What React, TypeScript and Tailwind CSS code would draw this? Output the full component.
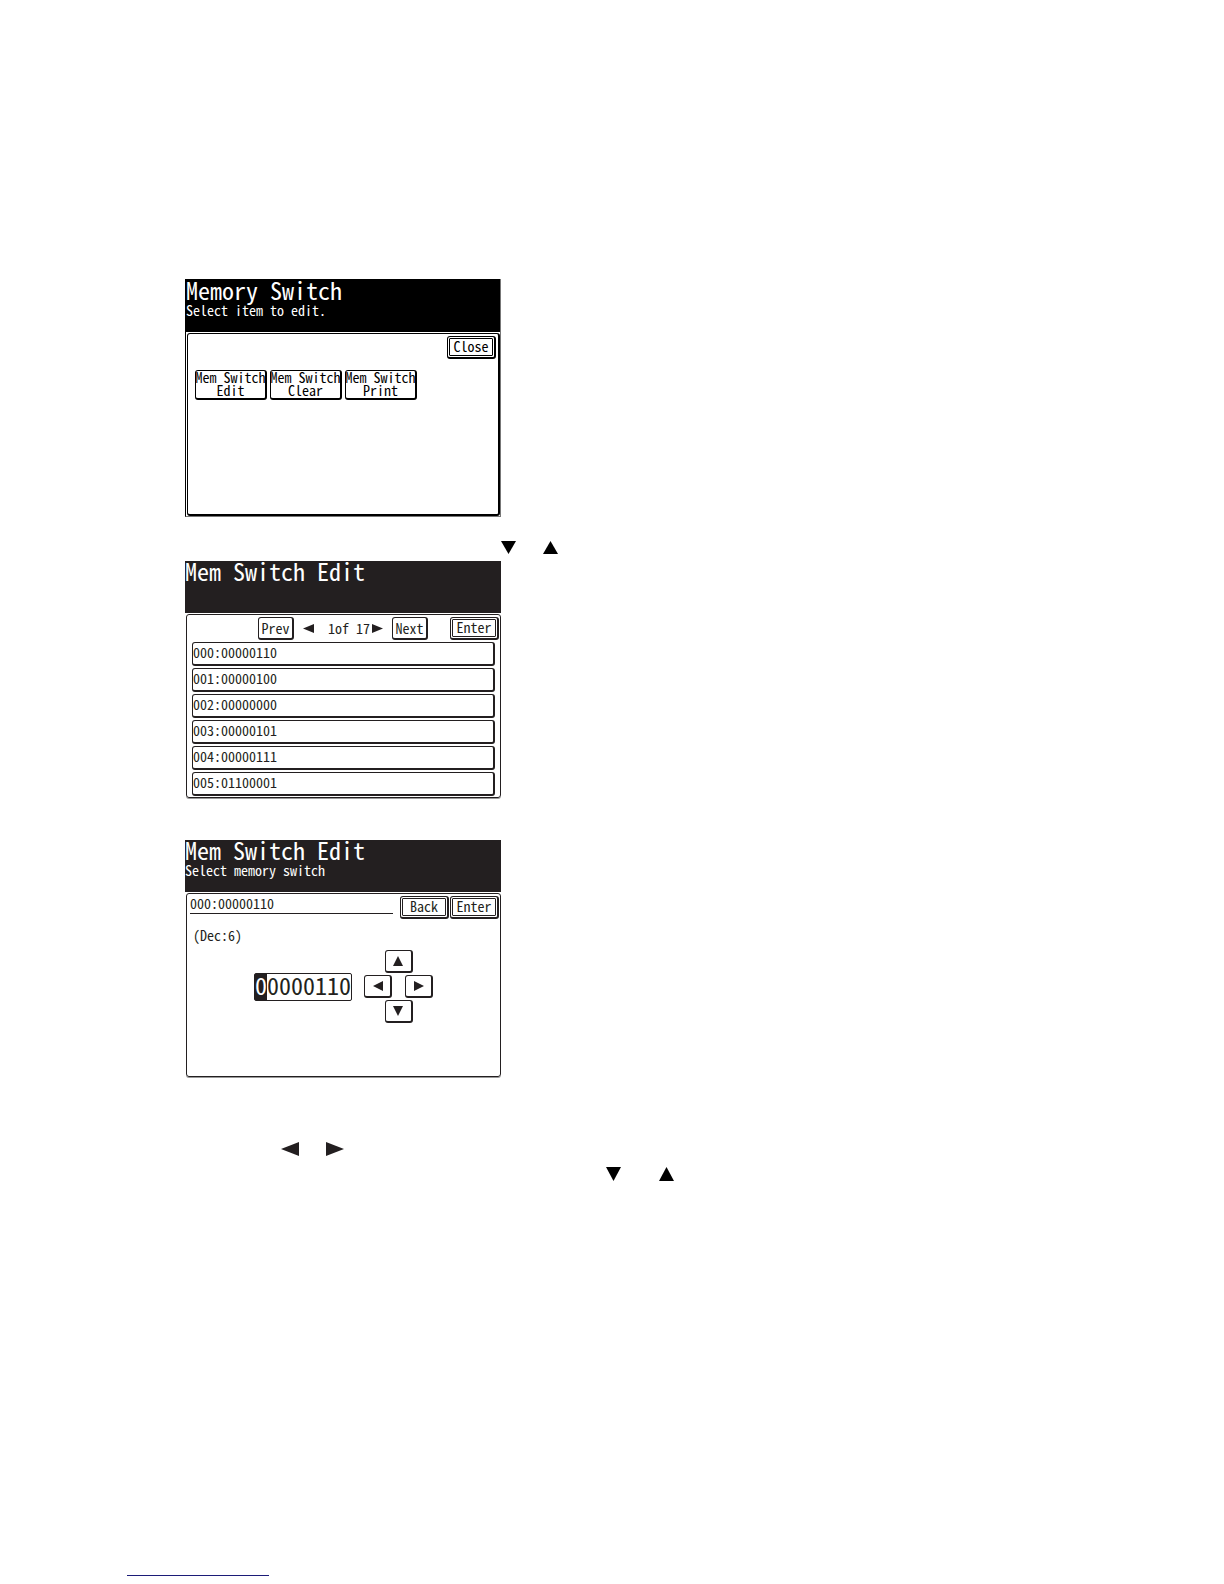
import React, { useState } from "react";

type Direction = "up" | "down" | "left" | "right";

const points: Record<Direction, string> = {
  up: "5,0 10,10 0,10",
  down: "0,0 10,0 5,10",
  left: "10,0 10,10 0,5",
  right: "0,0 10,5 0,10",
};

function Triangle({ dir, className }: { dir: Direction; className: string }) {
  return (
    <svg viewBox="0 0 10 10" preserveAspectRatio="none" fill="currentColor" aria-hidden="true" className={"shrink-0 " + className}>
      <polygon points={points[dir]} />
    </svg>
  );
}

function Header({ title, subtitle, className }: { title: string; subtitle?: string; className: string }) {
  return (
    <header className={"text-white " + className}>
      <h2 className="text-2xl leading-5">{title}</h2>
      {subtitle && <p className="mt-0.5 leading-4">{subtitle}</p>}
    </header>
  );
}

function DoubleButton({ label }: { label: string }) {
  return (
    <button type="button" className="h-[23px] w-[49px] shrink-0 rounded-[3px] border border-r-2 border-b-2 border-current p-px">
      <span className="block h-full rounded-[1px] border border-current text-center leading-[14px]">{label}</span>
    </button>
  );
}

function PageButton({ label }: { label: string }) {
  return (
    <button type="button" className="h-[23px] w-9 shrink-0 rounded-[3px] border border-r-2 border-b-2 border-current text-center leading-4">
      {label}
    </button>
  );
}

function ArrowButton({ dir }: { dir: Direction }) {
  return (
    <button
      type="button"
      aria-label={"Move " + dir}
      className="flex h-[23px] w-7 items-center justify-center rounded-[3px] border border-r-2 border-b-2 border-current"
    >
      <Triangle dir={dir} className="size-[10px]" />
    </button>
  );
}

const menu = ["Edit", "Clear", "Print"];
const switches = ["000:00000110", "001:00000100", "002:00000000", "003:00000101", "004:00000111", "005:01100001"];

export default function App() {
  const [digits] = useState("00000110");
  return (
    <main className="min-h-screen bg-white pt-[279px] pb-2 pl-[185px] font-['Noto_Sans_CJK_JP',monospace] text-sm text-[#231f20] [font-feature-settings:'hwid']">
      <section className="w-full max-w-[316px] border-r border-b border-l border-r-[#777] border-b-[#777] border-l-black text-black">
        <Header title="Memory Switch" subtitle="Select item to edit." className="h-[53px] bg-black pt-px" />
        <div className="mt-px ml-px h-[183px] rounded-[3px] border border-r-2 border-b-2 border-black">
          <div className="flex justify-end pt-0.5 pr-0.5">
            <DoubleButton label="Close" />
          </div>
          <nav className="mt-[11px] flex gap-[3px] pl-[7px]">
            {menu.map((m) => (
              <button key={m} type="button" className="h-[30px] w-[72px] rounded-[3px] border border-r-2 border-b-2 border-black pb-1 leading-[13px] whitespace-nowrap">
                <span className="flex flex-col items-center">
                  <span>Mem Switch</span>
                  <span>{m}</span>
                </span>
              </button>
            ))}
          </nav>
        </div>
      </section>

      <div className="mt-6 flex gap-[27px] pl-[316px] text-black">
        <Triangle dir="down" className="h-[13px] w-[15px]" />
        <Triangle dir="up" className="h-[13px] w-[15px]" />
      </div>

      <section className="mt-[7px] w-full max-w-[316px]">
        <Header title="Mem Switch Edit" className="h-[52px] bg-[#231f20]" />
        <div className="mt-px ml-px rounded-[3px] border border-current px-[5px] pb-px shadow-[0_1px_0_#999]">
          <div className="-mr-1 flex items-center pt-0.5 pl-[66px]">
            <PageButton label="Prev" />
            <Triangle dir="left" className="ml-[9px] h-[9px] w-[11px]" />
            <span className="ml-[14px] pb-0.5 leading-4 whitespace-nowrap">1of 17</span>
            <Triangle dir="right" className="ml-0.5 mr-[9px] h-[9px] w-[11px]" />
            <PageButton label="Next" />
            <div className="ml-auto flex">
              <DoubleButton label="Enter" />
            </div>
          </div>
          <ul className="mt-0.5 space-y-0.5">
            {switches.map((s) => (
              <li key={s} className="flex">
                <button type="button" className="h-6 w-full rounded-[3px] border border-r-2 border-b-2 border-current pb-1 text-left leading-4">
                  {s}
                </button>
              </li>
            ))}
          </ul>
        </div>
      </section>

      <section className="mt-[42px] w-full max-w-[316px]">
        <Header title="Mem Switch Edit" subtitle="Select memory switch" className="h-[52px] bg-[#231f20]" />
        <div className="mt-px ml-px h-[184px] rounded-[3px] border border-current shadow-[0_1px_0_#999]">
          <div className="flex items-start gap-px pt-0.5 pr-px pl-[3px]">
            <p className="mr-1.5 h-[18px] grow border-b border-current leading-[14px]">000:00000110</p>
            <DoubleButton label="Back" />
            <DoubleButton label="Enter" />
          </div>
          <p className="mt-2 pl-1.5 leading-4">(Dec:6)</p>
          <div className="mt-[7px] flex items-center gap-3 pl-[67px]">
            <output aria-label="Memory switch value" className="flex h-7 rounded-[2px] border border-current text-2xl leading-[22px]">
              <span className="bg-[#231f20] text-white">{digits[0]}</span>
              <span>{digits.slice(1)}</span>
            </output>
            <div className="flex flex-col items-center gap-0.5">
              <ArrowButton dir="up" />
              <div className="flex gap-[13px]">
                <ArrowButton dir="left" />
                <ArrowButton dir="right" />
              </div>
              <ArrowButton dir="down" />
            </div>
          </div>
        </div>
      </section>

      <div className="mt-[65px] flex gap-[27px] pl-24">
        <Triangle dir="left" className="h-[14px] w-[18px]" />
        <Triangle dir="right" className="h-[14px] w-[18px]" />
      </div>
      <div className="mt-[11px] flex gap-[38px] pl-[421px] text-black">
        <Triangle dir="down" className="h-[14px] w-[15px]" />
        <Triangle dir="up" className="h-[14px] w-[15px]" />
      </div>

      <hr className="mt-[394px] -ml-[58px] h-px w-[142px] border-0 bg-[#1c1c78]" />
    </main>
  );
}
